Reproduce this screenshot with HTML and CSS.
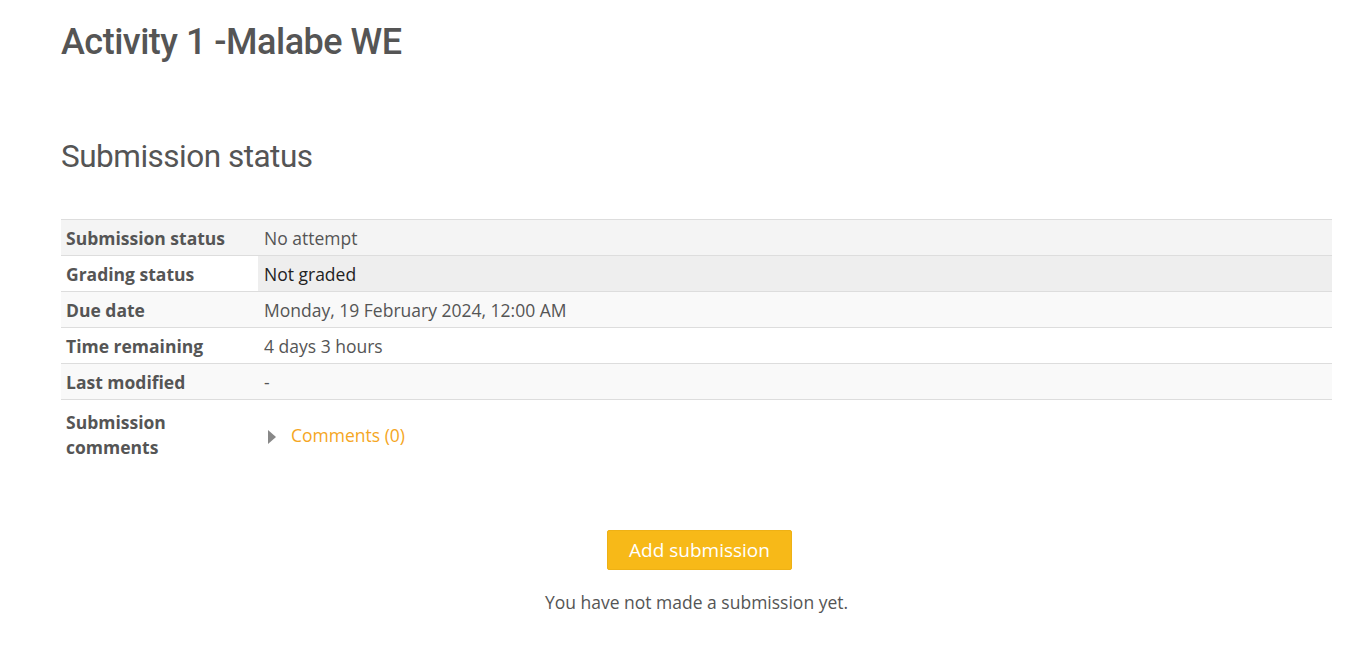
FILE: index.html
```html
<!DOCTYPE html>
<html>
<head>
<meta charset="utf-8">
<link rel="stylesheet" href="styles.css">
</head>
<body>
<main class="page">
  <h1 class="title">Activity 1 -Malabe WE</h1>
  <h2 class="section">Submission status</h2>
  <table class="status">
    <tr class="r1"><th>Submission status</th><td>No attempt</td></tr>
    <tr class="r2"><th>Grading status</th><td class="graded">Not graded</td></tr>
    <tr class="r3"><th>Due date</th><td>Monday, 19 February 2024, 12:00 AM</td></tr>
    <tr class="r4"><th>Time remaining</th><td>4 days 3 hours</td></tr>
    <tr class="r5"><th>Last modified</th><td>-</td></tr>
    <tr class="r6"><th>Submission<br>comments</th><td><span class="caret"></span><a class="comments" href="#">Comments (0)</a></td></tr>
  </table>
  <div class="actions">
    <button class="btn">Add submission</button>
    <p class="note">You have not made a submission yet.</p>
  </div>
</main>
</body>
</html>
```
FILE: styles.css
```css
html, body { margin: 0; padding: 0; background: #fff; }
body { font-family: "Open Sans", sans-serif; color: #555; font-size: 17.5px; }
.page { padding: 0 35px 0 61px; }
.title {
  font-family: Roboto, sans-serif;
  font-weight: 500;
  font-size: 36px;
  letter-spacing: -0.5px;
  color: #555;
  margin: 0;
  padding-top: 21px;
  line-height: 42px;
}
.section {
  font-family: Roboto, sans-serif;
  font-weight: 400;
  font-size: 31.5px;
  letter-spacing: -0.5px;
  color: #555;
  margin: 0;
  padding-top: 73px;
  line-height: 42px;
}
.status {
  margin-top: 41px;
  width: 100%;
  border-collapse: collapse;
  border-top: 1px solid #ddd;
}
.status th, .status td {
  text-align: left;
  padding: 0 5px;
  height: 35px;
  border-bottom: 1px solid #ddd;
  vertical-align: middle;
}
.status th { font-weight: 700; width: 187px; color: #555; }
.status td { padding-left: 6px; }
.r1 { background: #f4f4f4; }
.r2 th { background: #fff; }
.r2 td { background: #eee; }
.graded { color: #222; }
.r3, .r5 { background: #f9f9f9; }
.r6 th, .r6 td { border-bottom: none; height: 70px; padding-top: 0; line-height: 25px; }
.caret {
  display: inline-block;
  width: 0; height: 0;
  border-top: 7px solid transparent;
  border-bottom: 7px solid transparent;
  border-left: 8px solid #888;
  margin-left: 4px;
  margin-right: 15px;
  vertical-align: -2px;
}
.comments { color: #f5a623; text-decoration: none; }
.actions { display: flex; flex-direction: column; align-items: center; margin-top: 60px; }
.btn {
  font-family: "Open Sans", sans-serif;
  font-size: 19px;
  color: #fff;
  background: #f7b918;
  border: 1px solid #eeb115;
  border-radius: 2px;
  width: 185px;
  height: 40px;
  padding: 0;
  margin-left: 6px;
}
.note { margin: 20px 0 0; font-size: 17.5px; color: #555; }
```
